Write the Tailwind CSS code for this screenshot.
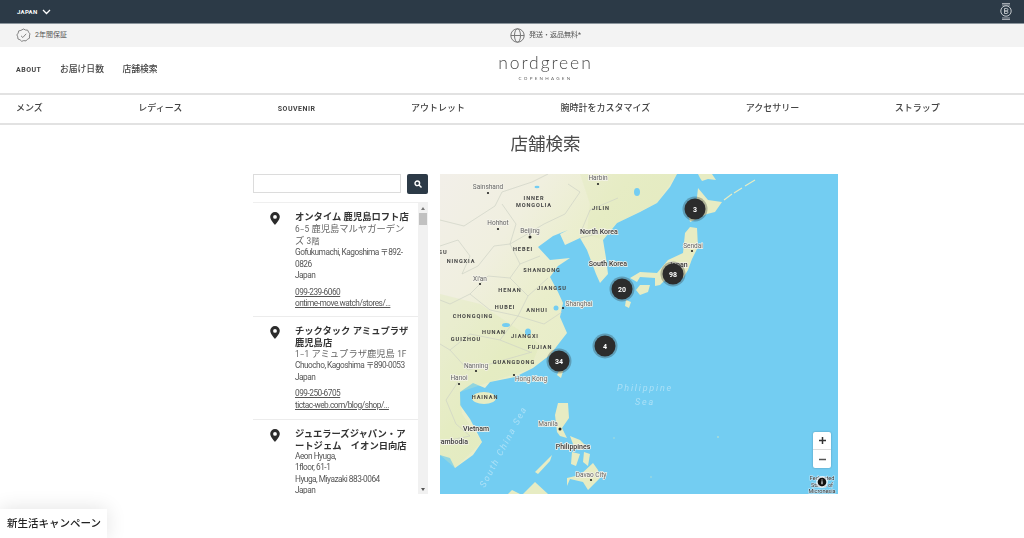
<!DOCTYPE html>
<html lang="ja">
<head>
    <meta charset="UTF-8">
    <meta name="viewport" content="width=device-width, initial-scale=1.0">
    <title>店舗検索</title>
    <script src="https://cdn.jsdelivr.net/npm/@tailwindcss/browser@4"></script>
</head>
<body class="bg-white overflow-hidden h-[538px] relative font-['Roboto','Noto_Sans_CJK_JP',sans-serif] text-[#3a3a3a]">

    <div class="w-[1091px] blur-[0.3px]">
        <!-- Top bar -->
        <div class="h-[24px] bg-[#2c3a47] border-b border-[#8a949c] flex items-center justify-between pl-[17px] pr-[78px]">
            <div class="flex items-center gap-[5px] text-white text-[6px] font-bold tracking-[0.3px]">
                JAPAN
                <svg width="9" height="6" viewBox="0 0 9 6" fill="none" stroke="#fff" stroke-width="1.3"><path d="M1 1l3.5 3.5L8 1"/></svg>
            </div>
            <svg width="14" height="19" viewBox="0 0 14 19" fill="none" stroke="#d5d9dc">
                <path d="M3 1.5h8M3 3h8M3 17.5h8M3 16h8" stroke-width="0.7"/>
                <circle cx="7" cy="9" r="5.2" stroke-width="0.9"/>
                <path d="M5.5 6.5h2.2a1.2 1.2 0 010 2.5H5.5h2.5a1.3 1.3 0 010 2.5H5.5z" stroke-width="0.8"/>
            </svg>
        </div>

        <!-- Benefit strip -->
        <div class="h-[23px] bg-[#f3f3f3] grid grid-cols-[1fr_auto_1fr] items-center text-[7px] text-[#555]">
            <div class="flex items-center gap-[3px] pl-[16px]">
                <svg width="15" height="15" viewBox="0 0 15 15" fill="none" stroke="#777" stroke-width="0.9">
                    <path d="M7.5 1l2 1 2.2.2.9 2 1.4 1.7-.6 2.1.1 2.2-2 1-1.500 1.700-2.200-.300-2.100.700-1.600-1.500-2.100-.800-.300-2.200L.900 6.900l1.300-1.800.500-2.200 2.200-.500z"/>
                    <path d="M5 7.800l1.800 1.700L10.200 5.800"/>
                </svg>
                <span class="ml-[1px]">2年間保証</span>
            </div>
            <div class="flex items-center gap-[4px]">
                <svg width="15" height="15" viewBox="0 0 15 15" fill="none" stroke="#777" stroke-width="1">
                    <circle cx="7.500" cy="7.500" r="6.700"/>
                    <ellipse cx="7.500" cy="7.500" rx="3" ry="6.700"/>
                    <path d="M.800 7.500h13.400"/>
                </svg>
                <span>発送・返品無料*</span>
            </div>
            <div class="flex justify-start pl-[468px]">
                <div class="w-[16px] h-[10px] bg-[#8d8d8d] flex items-center justify-center">
                    <div class="w-[7px] h-[7px] rounded-full border border-white"></div>
                </div>
            </div>
        </div>

        <!-- Header -->
        <div class="h-[46px] grid grid-cols-[1fr_auto_1fr] items-center">
            <div class="flex items-center gap-[18.500px] pl-[16px] text-[8.800px] font-medium text-[#444]">
                <span class="text-[7px] font-bold tracking-[0.5px]">ABOUT</span>
                <span>お届け日数</span>
                <span>店舗検索</span>
            </div>
            <div class="flex flex-col items-center text-[#4a4a4a] pb-[5px]">
                <span class="text-[17.500px] leading-[17px] font-['Lato',sans-serif] font-light tracking-[1.900px]">nordgreen</span>
                <span class="text-[4.500px] leading-[7px] mt-[4px] tracking-[2.300px] font-['Lato',sans-serif] text-[#666]">COPENHAGEN</span>
            </div>
            <div class="pl-[461px]">
                <svg width="13" height="13" viewBox="0 0 13 13" fill="none" stroke="#444" stroke-width="1.300">
                    <circle cx="5.500" cy="5.500" r="4.300"/>
                    <path d="M8.700 8.700L12 12"/>
                </svg>
            </div>
        </div>

        <!-- Main nav -->
        <nav class="h-[32px] border-y-2 border-[#e2e2e2] flex items-center gap-[95.500px] pl-[16px] text-[9px] font-medium text-[#444] whitespace-nowrap">
            <span>メンズ</span>
            <span>レディース</span>
            <span class="text-[7px] font-bold tracking-[0.5px]">SOUVENIR</span>
            <span>アウトレット</span>
            <span>腕時計をカスタマイズ</span>
            <span>アクセサリー</span>
            <span>ストラップ</span>
        </nav>

        <h1 class="text-center text-[17.500px] leading-[24px] mt-[7px] text-[#4a4a4a]">店舗検索</h1>

        <!-- Store locator -->
        <div class="flex gap-[12px] w-[585px] mx-auto mt-[18px]">
            <div class="w-[175px]">
                <div class="flex gap-[6px] h-[20px]">
                    <input type="text" class="w-[148px] h-[19px] border border-[#dcdcdc] bg-white">
                    <button class="w-[21px] h-[20px] bg-[#2c3a47] rounded-[2px] flex items-center justify-center">
                        <svg width="8" height="8" viewBox="0 0 8 8" fill="none" stroke="#fff" stroke-width="1.400"><circle cx="3.300" cy="3.300" r="2.300"/><path d="M5 5l2.500 2.500"/></svg>
                    </button>
                </div>
                <div class="flex mt-[8px] h-[292px] border-t border-[#efefef]">
                    <div class="w-[165px] h-full overflow-hidden text-[8.300px] leading-[11.400px] text-[#555]">
                        <!-- Store 1 -->
                        <div class="flex border-b border-[#ececec] h-[114px] pt-[8px]">
                            <div class="w-[42px] pl-[17px] pt-[1px] shrink-0">
                                <svg width="10" height="13" viewBox="0 0 10 13"><path fill-rule="evenodd" fill="#2b2b2b" d="M5 0a4.800 4.800 0 014.800 4.800C9.800 8 5 13 5 13S.2 8 .2 4.800A4.800 4.800 0 015 0zm0 3a1.900 1.900 0 100 3.800A1.900 1.900 0 005 3z"/></svg>
                            </div>
                            <div class="w-[112px]">
                                <p class="text-[9.300px] leading-[11.500px] font-bold text-[#333] whitespace-nowrap">オンタイム 鹿児島ロフト店</p>
                                <p class="text-[9.300px] text-[#666]"><span class="text-[8.300px]">6−5</span> 鹿児島マルヤガーデンズ <span class="text-[8.300px]">3階</span></p>
                                <p class="tracking-[-0.500px]">Gofukumachi, Kagoshima 〒892-0826</p>
                                <p class="tracking-[-0.500px]">Japan</p>
                                <p class="mt-[5px] underline tracking-[-0.500px]">099-239-6060</p>
                                <p class="underline tracking-[-0.500px]">ontime-move.watch/stores/...</p>
                            </div>
                        </div>
                        <!-- Store 2 -->
                        <div class="flex border-b border-[#ececec] h-[103px] pt-[8px]">
                            <div class="w-[42px] pl-[17px] pt-[1px] shrink-0">
                                <svg width="10" height="13" viewBox="0 0 10 13"><path fill-rule="evenodd" fill="#2b2b2b" d="M5 0a4.800 4.800 0 014.800 4.800C9.800 8 5 13 5 13S.2 8 .2 4.800A4.800 4.800 0 015 0zm0 3a1.900 1.900 0 100 3.800A1.900 1.900 0 005 3z"/></svg>
                            </div>
                            <div class="w-[118px]">
                                <p class="text-[9.300px] leading-[11.500px] font-bold text-[#333]">チックタック アミュプラザ鹿児島店</p>
                                <p class="text-[9.300px] text-[#666] whitespace-nowrap"><span class="text-[8.300px]">1−1</span> アミュプラザ鹿児島 <span class="text-[8.300px]">1F</span></p>
                                <p class="tracking-[-0.500px] whitespace-nowrap">Chuocho, Kagoshima 〒890-0053</p>
                                <p class="tracking-[-0.500px]">Japan</p>
                                <p class="mt-[5px] underline tracking-[-0.500px]">099-250-6705</p>
                                <p class="underline tracking-[-0.500px]">tictac-web.com/blog/shop/...</p>
                            </div>
                        </div>
                        <!-- Store 3 -->
                        <div class="flex pt-[8px]">
                            <div class="w-[42px] pl-[17px] pt-[1px] shrink-0">
                                <svg width="10" height="13" viewBox="0 0 10 13"><path fill-rule="evenodd" fill="#2b2b2b" d="M5 0a4.800 4.800 0 014.800 4.800C9.800 8 5 13 5 13S.2 8 .2 4.800A4.800 4.800 0 015 0zm0 3a1.900 1.900 0 100 3.800A1.900 1.900 0 005 3z"/></svg>
                            </div>
                            <div class="w-[118px]">
                                <p class="text-[9.300px] leading-[11.500px] font-bold text-[#333]">ジュエラーズジャパン・アートジェム　イオン日向店</p>
                                <p class="tracking-[-0.500px]">Aeon Hyuga,</p>
                                <p class="tracking-[-0.500px]">1floor, 61-1</p>
                                <p class="tracking-[-0.500px]">Hyuga, Miyazaki 883-0064</p>
                                <p class="tracking-[-0.500px]">Japan</p>
                            </div>
                        </div>
                    </div>
                    <!-- Scrollbar -->
                    <div class="w-[10px] h-full bg-[#f1f1f1] flex flex-col items-center">
                        <div class="h-[10px] flex items-center"><div class="w-0 h-0 border-x-[2px] border-x-transparent border-b-[3px] border-b-[#777]"></div></div>
                        <div class="w-[8px] h-[12px] bg-[#c1c1c1]"></div>
                        <div class="mt-auto h-[10px] flex items-center"><div class="w-0 h-0 border-x-[2px] border-x-transparent border-t-[3px] border-t-[#555]"></div></div>
                    </div>
                </div>
            </div>

            <!-- Map -->
            <div class="relative w-[398px] h-[320px] bg-[#73cdf2] overflow-hidden">
                <svg class="absolute inset-0" width="398" height="320" viewBox="0 0 398 320" font-family="Roboto, sans-serif">
                    <defs>
                        <linearGradient id="land" x1="0" y1="0" x2="0.9" y2="0.8">
                            <stop offset="0" stop-color="#f2efe9"/>
                            <stop offset="0.28" stop-color="#f0efdf"/>
                            <stop offset="0.5" stop-color="#eaeecb"/>
                            <stop offset="1" stop-color="#e3ebc2"/>
                        </linearGradient>
                    </defs>
                    <!-- Mainland -->
                    <path fill="url(#land)" d="M0 0H237L230 13L217 29L200 38L177 49L163 66L166 84L168 100L160 109L156 100L147 76L140 64L125 71L120 60L128 56L113 62L98 73L110 86L130 84L118 92L110 103L118 118L123 129L120 143L127 159L120 168L110 181L93 194L75 203L50 208L45 214L33 209L20 218L20 231L30 245L42 268L33 281L15 294L10 284L0 281Z"/>
                    <!-- Green south -->
                    <path fill="#dbe7b0" opacity="0.3" d="M0 120L40 130L70 150L100 170L90 195L50 208L20 218L22 240L42 268L15 294L0 281Z"/>
                    <path fill="#dbe7b0" opacity="0.25" d="M140 0H237L217 29L177 49L163 66L147 60L150 30Z"/>
                    <!-- Borders -->
                    <g fill="none" stroke="#cfd2c6" stroke-width="0.7">
                        <path d="M0 46L24 52L55 32L62 18L92 8L108 0"/>
                        <path d="M62 30L76 50L70 70L84 62L104 50L125 40L140 18L128 10"/>
                        <path d="M140 60L150 36L178 24"/>
                        <path d="M0 72L18 66L30 82L22 100L38 92L54 72L70 70L80 90L70 104L48 102L30 120L10 130L0 126"/>
                        <path d="M80 90L100 82M70 104L88 122L108 104M88 122L78 142L50 136L30 120M78 142L104 150L122 138M78 142L60 166L90 178M60 166L30 160L10 176L0 170"/>
                        <path d="M10 176L28 196L50 190L92 178"/>
                        <path d="M18 208L6 226L16 250L30 262L0 268"/>
                        <path d="M140 64L165 58"/>
                    </g>
                    <!-- Korea / Japan / islands -->
                    <g fill="#e7ecc3">
                        <path d="M258 14L268 26L282 28L275 38L267 40L250 48L248 38L256 32Z"/>
                        <path d="M250 53L257 54L258 73L252 85L248 96L243 104L227 104L220 111L215 112L215 104L200 103L197 108L190 104L200 98L217 99L228 86L243 79L245 59Z"/>
                        <path d="M200 111L210 111L208 118L200 121L196 116Z"/>
                        <path d="M186 126L191 128L189 134L185 132Z"/>
                        <path d="M258 0H272L276 6L268 5L262 7L260 4Z"/>
                        <path d="M120 194L124 194L121 204L117 201Z"/>
                        <ellipse cx="44" cy="224" rx="12" ry="6"/>
                        <path d="M118 229L128 229L129 244L122 254L127 264L120 262L117 258L115 241Z"/>
                        <path d="M95 298L112 281L110 287L98 300Z"/>
                        <path d="M130 262L140 266L146 272L142 276L133 270Z"/>
                        <path d="M132 278L140 280L136 292L131 290Z"/>
                        <path d="M144 278L150 280L148 292L143 288Z"/>
                        <path d="M140 301L153 289L158 296L160 304L148 316L143 308L130 305L127 312L127 304Z"/>
                        <path d="M83 320L95 308L108 320Z"/>
                        <path d="M68 320L72 316L80 320Z"/>
                    </g>
                    <g fill="none" stroke="#e7ecc3" stroke-width="1.200">
                        <path d="M284 26L292 20M294 19L302 14M305 12L315 6"/>
                    </g>
                    <!-- Inland water -->
                    <g fill="#73cdf2">
                        <ellipse cx="97" cy="13" rx="2.500" ry="1.200"/>
                        <ellipse cx="88" cy="158" rx="3" ry="3.500"/>
                        <ellipse cx="66" cy="151" rx="4" ry="2"/>
                        <ellipse cx="116" cy="134" rx="2.500" ry="2.500"/>
                        <ellipse cx="197" cy="18" rx="3" ry="4"/>
                    </g>

                    <!-- Place names -->
                    <g fill="#666" font-size="6.500" text-anchor="middle" stroke="#f4f3ea" stroke-width="1.500" paint-order="stroke">
                        <text x="158" y="6">Harbin</text>
                        <text x="48" y="15">Sainshand</text>
                        <text x="58" y="51">Hohhot</text>
                        <text x="90" y="59">Beijing</text>
                        <text x="40" y="107">Xi'an</text>
                        <text x="139" y="132">Shanghai</text>
                        <text x="36" y="194">Nanning</text>
                        <text x="91" y="207">Hong Kong</text>
                        <text x="19" y="206">Hanoi</text>
                        <text x="108" y="252">Manila</text>
                        <text x="151" y="303">Davao City</text>
                        <text x="253" y="74">Sendai</text>
                    </g>
                    <g fill="#444" font-size="5.600" font-weight="700" letter-spacing="0.900" text-anchor="middle">
                        <text x="94" y="26">INNER</text>
                        <text x="94" y="33">MONGOLIA</text>
                        <text x="161" y="36">JILIN</text>
                        <text x="83" y="77">HEBEI</text>
                        <text x="21" y="89">NINGXIA</text>
                        <text x="3" y="80">SU</text>
                        <text x="102" y="98">SHANDONG</text>
                        <text x="70" y="118">HENAN</text>
                        <text x="112" y="116">JIANGSU</text>
                        <text x="65" y="135">HUBEI</text>
                        <text x="97" y="138">ANHUI</text>
                        <text x="33" y="144">CHONGQING</text>
                        <text x="54" y="160">HUNAN</text>
                        <text x="26" y="167">GUIZHOU</text>
                        <text x="85" y="164">JIANGXI</text>
                        <text x="100" y="175">FUJIAN</text>
                        <text x="74" y="190">GUANGDONG</text>
                        <text x="45" y="225">HAINAN</text>
                    </g>
                    <g fill="#3a3a3a" font-size="7" font-weight="500" text-anchor="middle" stroke="#f4f3ea" stroke-width="1.500" paint-order="stroke">
                        <text x="159" y="60">North Korea</text>
                        <text x="168" y="92">South Korea</text>
                        <text x="238" y="93">Japan</text>
                        <text x="36" y="257">Vietnam</text>
                        <text x="12" y="270">Cambodia</text>
                        <text x="133" y="275">Philippines</text>
                    </g>
                    <g fill="#222">
                        <circle cx="158" cy="10" r="1.100"/><circle cx="48" cy="19" r="1.100"/><circle cx="58" cy="55" r="1.100"/>
                        <circle cx="90" cy="63" r="1.500"/><circle cx="40" cy="110" r="1.100"/><circle cx="123" cy="134" r="1.100"/>
                        <circle cx="36" cy="197" r="1.100"/><circle cx="74" cy="201" r="1.100"/><circle cx="19" cy="210" r="1.100"/>
                        <circle cx="120" cy="255" r="1.500"/><circle cx="151" cy="306" r="1.100"/><circle cx="252" cy="77" r="1.100"/>
                    </g>
                    <!-- Sea names -->
                    <g fill="#ffffff" fill-opacity="0.4" font-size="9" font-style="italic" text-anchor="middle" letter-spacing="1.800">
                        <text x="205" y="217">Philippine</text>
                        <text x="205" y="231">Sea</text>
                        <text transform="translate(66 274) rotate(-62)">South China Sea</text>
                    </g>
                    <g fill="#c9e7c8" opacity="0.7"><circle cx="278" cy="263" r="0.900"/><circle cx="211" cy="303" r="0.800"/><circle cx="174" cy="264" r="0.800"/></g>

                    <!-- Clusters -->
                    <g text-anchor="middle" font-size="7" font-weight="700" fill="#fff">
                        <g><circle cx="255" cy="35" r="12.500" fill="#2f2f2f" fill-opacity="0.3"/><circle cx="255" cy="35" r="10.500" fill="#2c2c2c"/><text x="255" y="37.500">3</text></g>
                        <g><circle cx="233" cy="100" r="12.500" fill="#2f2f2f" fill-opacity="0.3"/><circle cx="233" cy="100" r="10.500" fill="#2c2c2c"/><text x="233" y="102.500">98</text></g>
                        <g><circle cx="182" cy="115" r="12.500" fill="#2f2f2f" fill-opacity="0.3"/><circle cx="182" cy="115" r="10.500" fill="#2c2c2c"/><text x="182" y="117.500">20</text></g>
                        <g><circle cx="165" cy="172" r="12.500" fill="#2f2f2f" fill-opacity="0.3"/><circle cx="165" cy="172" r="10.500" fill="#2c2c2c"/><text x="165" y="174.500">4</text></g>
                        <g><circle cx="119" cy="187" r="12.500" fill="#2f2f2f" fill-opacity="0.3"/><circle cx="119" cy="187" r="10.500" fill="#2c2c2c"/><text x="119" y="189.500">34</text></g>
                    </g>
                    <!-- Attribution -->
                    <g fill="#333" font-size="5.500" text-anchor="middle" stroke="#cfeaf7" stroke-width="1" paint-order="stroke">
                        <text x="382" y="306">Federated</text>
                        <text x="382" y="313">States of</text>
                        <text x="382" y="319">Micronesia</text>
                    </g>
                    <circle cx="382" cy="308" r="6" fill="#fff" fill-opacity="0.7"/>
                    <circle cx="382" cy="308" r="4.300" fill="#111"/>
                    <path d="M382 305.500v.900M382 307.300v3" stroke="#fff" stroke-width="1.100"/>
                </svg>

                <!-- Zoom control -->
                <div class="absolute left-[373px] top-[258px] w-[18px] h-[36px] bg-white rounded-[2px] shadow-[0_0_2px_rgba(0,0,0,0.3)] flex flex-col">
                    <button class="h-[18px] border-b border-[#ddd] flex items-center justify-center">
                        <svg width="9" height="9" viewBox="0 0 9 9" stroke="#333" stroke-width="1.500"><path d="M1 4.500h7M4.500 1v7"/></svg>
                    </button>
                    <button class="h-[18px] flex items-center justify-center">
                        <svg width="9" height="9" viewBox="0 0 9 9" stroke="#555" stroke-width="1.500"><path d="M1 4.500h7"/></svg>
                    </button>
                </div>
            </div>
        </div>
    </div>

    <!-- Campaign tab -->
    <div class="absolute left-0 bottom-0 w-[107px] h-[29px] bg-white shadow-[0_0_20px_rgba(0,0,0,0.12)] flex items-center pl-[7px] pt-[1px] text-[10.500px] font-medium text-[#222] whitespace-nowrap">新生活キャンペーン</div>

</body>
</html>
